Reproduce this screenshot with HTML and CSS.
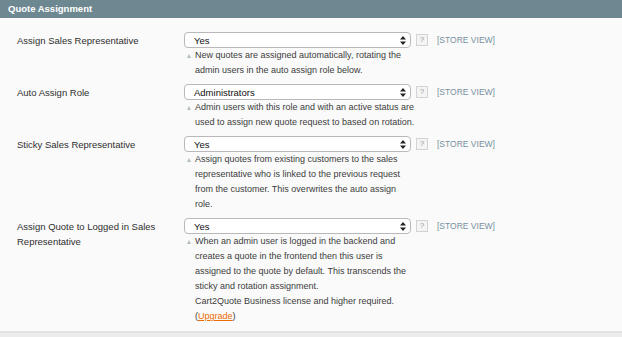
FILE: index.html
```html
<!DOCTYPE html>
<html>
<head>
    <meta charset="UTF-8">
    <title>Quote Assignment</title>
    <link rel="stylesheet" href="styles.css">
</head>
<body>
    <div class="section">
        <div class="head">Quote Assignment</div>
        <div class="fields">
            <div class="row">
                <div class="label">Assign Sales Representative</div>
                <div class="value">
                    <div class="select">Yes<svg class="arrows" width="6" height="9" viewBox="0 0 6 9"><path d="M3 0L6 3.5H0Z M3 9L0 5.5H6Z" fill="#222"/></svg></div>
                    <p class="note">New quotes are assigned automatically, rotating the<br>admin users in the auto assign role below.</p>
                </div>
                <div class="help">?</div>
                <div class="scope">[STORE VIEW]</div>
            </div>
            <div class="row">
                <div class="label">Auto Assign Role</div>
                <div class="value">
                    <div class="select">Administrators<svg class="arrows" width="6" height="9" viewBox="0 0 6 9"><path d="M3 0L6 3.5H0Z M3 9L0 5.5H6Z" fill="#222"/></svg></div>
                    <p class="note">Admin users with this role and with an active status are<br>used to assign new quote request to based on rotation.</p>
                </div>
                <div class="help">?</div>
                <div class="scope">[STORE VIEW]</div>
            </div>
            <div class="row">
                <div class="label">Sticky Sales Representative</div>
                <div class="value">
                    <div class="select">Yes<svg class="arrows" width="6" height="9" viewBox="0 0 6 9"><path d="M3 0L6 3.5H0Z M3 9L0 5.5H6Z" fill="#222"/></svg></div>
                    <p class="note">Assign quotes from existing customers to the sales<br>representative who is linked to the previous request<br>from the customer. This overwrites the auto assign<br>role.</p>
                </div>
                <div class="help">?</div>
                <div class="scope">[STORE VIEW]</div>
            </div>
            <div class="row">
                <div class="label">Assign Quote to Logged in Sales Representative</div>
                <div class="value">
                    <div class="select">Yes<svg class="arrows" width="6" height="9" viewBox="0 0 6 9"><path d="M3 0L6 3.5H0Z M3 9L0 5.5H6Z" fill="#222"/></svg></div>
                    <p class="note">When an admin user is logged in the backend and<br>creates a quote in the frontend then this user is<br>assigned to the quote by default. This transcends the<br>sticky and rotation assignment.<br>Cart2Quote Business license and higher required.<br>(<a href="#">Upgrade</a>)</p>
                </div>
                <div class="help">?</div>
                <div class="scope">[STORE VIEW]</div>
            </div>
        </div>
    </div>
</body>
</html>
```

FILE: styles.css
```css
body,p{margin:0;}
body{
    background-color:#ececec;
    font-family:"Liberation Sans",Arial,Helvetica,sans-serif;
    color:#333;
}
.section{
    background-color:#fafafa;
    border-bottom:2px solid #e2e2e2;
    height:331px;
}
.head{
    height:18px;
    line-height:18px;
    padding-left:8px;
    background-color:#6e8891;
    color:#fff;
    font-size:9.5px;
    font-weight:bold;
}
.fields{
    padding:14px 0 0 17px;
}
.row{
    display:grid;
    grid-template-columns:162px 227px 12px auto;
    column-gap:5px;
    padding-bottom:6px;
}
.label{
    padding-top:1px;
    padding-right:20px;
    font-size:9.5px;
    line-height:15px;
    color:#2f2f2f;
}
.select{
    display:flex;
    align-items:center;
    justify-content:space-between;
    box-sizing:border-box;
    height:16px;
    padding:0 4px 0 9px;
    border:1px solid #b9b9b9;
    border-radius:4px;
    background-color:#fff;
    font-size:9.5px;
    color:#111;
}
.note{
    position:relative;
    margin-right:-30px;
    padding-left:11px;
    font-size:9px;
    line-height:15px;
    white-space:nowrap;
    color:#3c3c3c;
}
.note:before{
    content:"";
    position:absolute;
    left:3px;
    top:6px;
    border-left:2.5px solid transparent;
    border-right:2.5px solid transparent;
    border-bottom:4px solid #b4bfc4;
}
.note a{
    color:#eb6c00;
}
.help{
    box-sizing:border-box;
    width:12px;
    height:12px;
    margin-top:2px;
    border:1px solid #d3d3d3;
    background-color:#f4f4f4;
    color:#999;
    font-size:8px;
    line-height:10px;
    text-align:center;
}
.scope{
    padding-left:4px;
    font-size:8.5px;
    line-height:16px;
    color:#7890a0;
}
```
